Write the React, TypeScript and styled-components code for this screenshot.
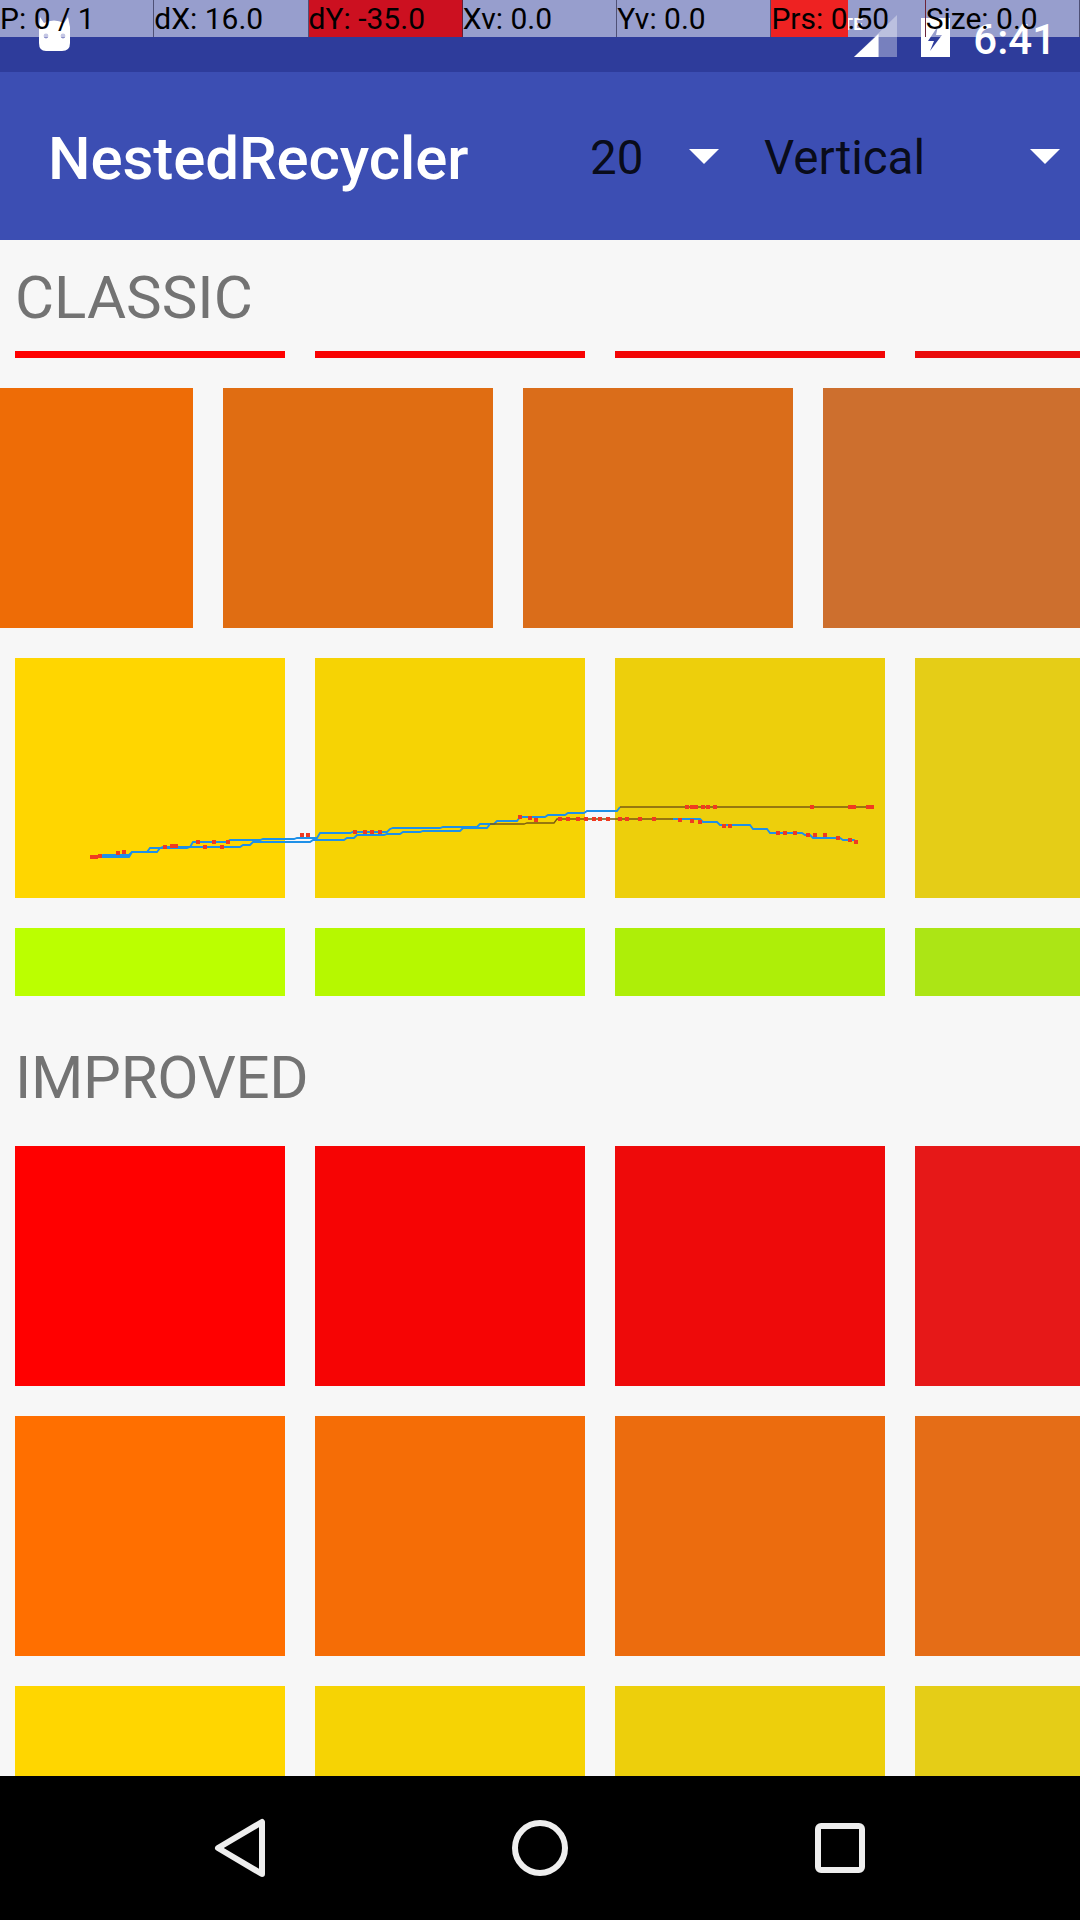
import React from "react";
import styled, { createGlobalStyle } from "styled-components";

const Global = createGlobalStyle`
  html, body { margin: 0; padding: 0; background: #000; }
  #root { width: 1080px; height: 1920px; }
`;

const Screen = styled.div`
  position: relative;
  width: 1080px;
  height: 1920px;
  display: flex;
  flex-direction: column;
  overflow: hidden;
  background: #f7f7f7;
  font-family: Roboto, "Liberation Sans", sans-serif;
`;

const StatusBar = styled.div`
  height: 72px;
  flex: none;
  background: #2e3c9b;
  display: flex;
  align-items: flex-start;
  padding: 15px 24px 0 37px;
  box-sizing: border-box;
`;

const StatusRight = styled.div`
  margin-left: auto;
  display: flex;
  align-items: flex-start;
`;

const NotifyText = styled.span`
  color: #fff;
  font-size: 17px;
  font-weight: 700;
  line-height: 18px;
  width: 9px;
  transform: translateX(-10px);
`;

const Clock = styled.span`
  color: #fff;
  font-size: 42px;
  font-weight: 500;
  line-height: 42px;
  margin-left: 23px;
  margin-top: 4px;
`;

const PointerBar = styled.div`
  position: absolute;
  left: 0;
  top: 0;
  width: 1080px;
  height: 37px;
  display: grid;
  grid-template-columns: repeat(7, 1fr);
  grid-auto-rows: 37px;
  background: rgba(255, 255, 255, 0.5);
`;

const PointerCell = styled.div<{ $bg?: string; $fill?: number }>`
  color: #000;
  font-size: 30px;
  line-height: 38px;
  white-space: nowrap;
  border-right: 1px solid rgba(40, 40, 70, 0.65);
  background: ${(p) =>
    p.$bg
      ? `linear-gradient(to right, ${p.$bg} ${p.$fill ?? 100}%, transparent ${p.$fill ?? 100}%)`
      : "none"};
`;

const Toolbar = styled.header`
  height: 168px;
  flex: none;
  background: #3c4eb3;
  display: flex;
  align-items: center;
  padding: 5px 20px 0 48px;
  box-sizing: border-box;
`;

const Title = styled.h1`
  margin: 0;
  color: #fff;
  font-size: 60px;
  font-weight: 500;
  line-height: 70px;
  letter-spacing: -0.1px;
`;

const Spinners = styled.div`
  margin-left: auto;
  display: flex;
  gap: 45px;
`;

const Spinner = styled.div<{ $width: number }>`
  width: ${(p) => p.$width}px;
  display: flex;
  align-items: center;
  justify-content: space-between;
`;

const SpinnerText = styled.span`
  color: rgba(0, 0, 0, 0.87);
  font-size: 47.5px;
  line-height: 56px;
  transform: translateY(-1px);
`;

const Caret = styled.span`
  width: 0;
  height: 0;
  border-left: 15px solid transparent;
  border-right: 15px solid transparent;
  border-top: 15px solid #fff;
  transform: translateY(-2px);
`;

const Content = styled.main`
  flex: 1;
  min-height: 0;
  overflow: hidden;
  display: flex;
  flex-direction: column;
`;

const SectionLabel = styled.h2<{ $height: number; $top: number; $tracking?: number }>`
  margin: 0;
  flex: none;
  box-sizing: border-box;
  height: ${(p) => p.$height}px;
  padding: ${(p) => p.$top}px 0 0 15px;
  color: #737373;
  font-size: 60px;
  font-weight: 400;
  line-height: 60px;
  letter-spacing: ${(p) => p.$tracking ?? 0}px;
`;

const Row = styled.div<{ $height: number; $shift?: number; $after?: number }>`
  flex: none;
  display: flex;
  gap: 30px;
  height: ${(p) => p.$height}px;
  margin-left: ${(p) => p.$shift ?? 15}px;
  margin-bottom: ${(p) => p.$after ?? 30}px;
`;

const Tile = styled.div<{ $color: string }>`
  flex: none;
  width: 270px;
  height: 100%;
  background: ${(p) => p.$color};
`;

const NavBar = styled.nav`
  height: 144px;
  flex: none;
  background: #000;
  display: grid;
  grid-template-columns: repeat(3, 300px);
  padding: 0 90px;
  box-sizing: border-box;
`;

const NavButton = styled.div`
  display: flex;
  align-items: center;
  justify-content: center;
`;

const TraceLayer = styled.svg`
  position: absolute;
  left: 0;
  top: 0;
  pointer-events: none;
`;

const REDS = ["#ff0000", "#f60404", "#ee0a0a", "#e61818"];
const ORANGES = ["#ff6f00", "#f56d06", "#ec6c0e", "#e56d17"];
const YELLOWS = ["#ffd600", "#f6d304", "#edcf0c", "#e5cd17"];
const LIMES = ["#bbff00", "#b6f800", "#aeee08", "#ace515"];
const CLASSIC_ORANGES = ["#ee6c06", "#e06d12", "#da6d1a", "#cd6f2e"];
const CLASSIC_BARS = ["#ff0000", "#f80202", "#f20505", "#ea0c0c"];

const CELLS: { text: string; bg?: string; fill?: number }[] = [
  { text: "P: 0 / 1" },
  { text: "dX: 16.0" },
  { text: "dY: -35.0", bg: "#cc1020" },
  { text: "Xv: 0.0" },
  { text: "Yv: 0.0" },
  { text: "Prs: 0.50", bg: "#ee2222", fill: 50 },
  { text: "Size: 0.0" },
];

type P = [number, number];
const UPPER: P[] = [
  [90, 857], [103, 855], [132, 852], [150, 848], [163, 847], [193, 842], [227, 842], [230, 840],
  [263, 839], [297, 838], [320, 833], [353, 832], [390, 829], [393, 828], [443, 827], [480, 824],
  [497, 821], [520, 817], [548, 815], [568, 813], [587, 811], [620, 807], [872, 807],
];
const LOWER: P[] = [
  [90, 857], [132, 852], [160, 848], [190, 847], [243, 845], [253, 842], [287, 842], [313, 840],
  [347, 838], [357, 835], [387, 834], [403, 832], [423, 831], [463, 828], [490, 824], [527, 823],
  [557, 819], [673, 819], [703, 822], [720, 825], [753, 829], [770, 833], [805, 835], [813, 838],
  [843, 840], [857, 843],
];
const DOTS: P[] = [
  [92, 857], [96, 857], [100, 856], [118, 853], [124, 852], [165, 847], [172, 846], [176, 846],
  [198, 842], [205, 847], [214, 842], [222, 847], [228, 842], [302, 835], [308, 835], [355, 832],
  [365, 832], [372, 832], [380, 832], [520, 817], [530, 818], [536, 820], [560, 819], [568, 819],
  [578, 819], [586, 819], [594, 819], [600, 819], [608, 819], [620, 819], [627, 819], [640, 819],
  [654, 819], [680, 820], [692, 821], [700, 822], [724, 826], [730, 826], [778, 833], [785, 833],
  [795, 833], [808, 835], [815, 835], [825, 835], [838, 838], [850, 840], [856, 842],
  [687, 807], [692, 807], [696, 807], [703, 807], [708, 807], [715, 807], [812, 807], [850, 807],
  [854, 807], [868, 807], [872, 807],
];

// the pointer trail moves in small steps: a level run, then a short hop to the next sample
const steps = (a: P[]) =>
  a
    .flatMap((p, i) => (i === 0 ? [p] : ([[p[0] - 3, a[i - 1][1]], p] as P[])))
    .map((p) => p.join(","))
    .join(" ");

const Trace = () => (
  <TraceLayer width={1080} height={1920} viewBox="0 0 1080 1920">
    <polyline points={steps(UPPER.slice(0, -1))} fill="none" stroke="#1e90e8" strokeWidth={1.8} />
    <polyline points={steps(LOWER.slice(0, 15))} fill="none" stroke="#1e90e8" strokeWidth={1.8} />
    <polyline points={steps(LOWER.slice(17))} fill="none" stroke="#1e90e8" strokeWidth={1.8} />
    <polyline points={steps(UPPER.slice(-2))} fill="none" stroke="#7a5a10" strokeWidth={1.3} />
    <polyline points={steps(LOWER.slice(14, 18))} fill="none" stroke="#7a5a10" strokeWidth={1.3} />
    {DOTS.map(([x, y], i) => (
      <rect key={i} x={x - 2} y={y - 2} width={4} height={4} fill="#f03a20" />
    ))}
  </TraceLayer>
);

const AndroidHead = () => (
  <svg width="34" height="36" viewBox="0 0 34 36">
    <path
      d="M3 2 L7 8 Q17 3 27 8 L31 2 L33 12 L33 28 Q33 36 25 36 L9 36 Q2 36 2 28 L2 12 Z"
      fill="#fff"
    />
    <circle cx="9" cy="21" r="2.4" fill="#8a8ec8" />
    <circle cx="26" cy="21" r="2.4" fill="#8a8ec8" />
  </svg>
);

const SignalIcon = () => (
  <svg width="43" height="42" viewBox="0 0 42 42" preserveAspectRatio="none">
    <path d="M42 0 L42 42 L0 42 Z" fill="#fff" fillOpacity={0.35} />
    <path d="M24 19 L24 42 L0 42 Z" fill="#fff" />
  </svg>
);

const BatteryIcon = () => (
  <svg width="29" height="39" viewBox="0 0 29 39" style={{ marginLeft: 24, marginTop: 3 }}>
    <path d="M0 0 H29 V39 H0 Z M17 8 L7 23 H13 L9 33 L21 17 H15 Z" fill="#fff" fillRule="evenodd" />
  </svg>
);

const BackIcon = () => (
  <svg width="54" height="62" viewBox="0 0 54 62">
    <path d="M49 5 L49 57 L5 31 Z" fill="none" stroke="#eee" strokeWidth={6} strokeLinejoin="round" />
  </svg>
);

const HomeIcon = () => (
  <svg width="56" height="56" viewBox="0 0 56 56">
    <circle cx="28" cy="28" r="25" fill="none" stroke="#eee" strokeWidth={6} />
  </svg>
);

const RecentIcon = () => (
  <svg width="50" height="50" viewBox="0 0 50 50">
    <rect x="3" y="3" width="44" height="44" rx="3" fill="none" stroke="#eee" strokeWidth={6} />
  </svg>
);

const Tiles = ({ colors }: { colors: string[] }) => (
  <>
    {colors.map((c, i) => (
      <Tile key={i} $color={c} />
    ))}
  </>
);

export default function App() {
  return (
    <Screen>
      <Global />
      <StatusBar>
        <AndroidHead />
        <StatusRight>
          <NotifyText>LTE</NotifyText>
          <SignalIcon />
          <BatteryIcon />
          <Clock>6:41</Clock>
        </StatusRight>
      </StatusBar>
      <Toolbar>
        <Title>NestedRecycler</Title>
        <Spinners>
          <Spinner $width={129}>
            <SpinnerText>20</SpinnerText>
            <Caret />
          </Spinner>
          <Spinner $width={296}>
            <SpinnerText>Vertical</SpinnerText>
            <Caret />
          </Spinner>
        </Spinners>
      </Toolbar>
      <Content>
        <SectionLabel $height={111} $top={28}>CLASSIC</SectionLabel>
        <Row $height={7}>
          <Tiles colors={CLASSIC_BARS} />
        </Row>
        <Row $height={240} $shift={-77}>
          <Tiles colors={CLASSIC_ORANGES} />
        </Row>
        <Row $height={240}>
          <Tiles colors={YELLOWS} />
        </Row>
        <Row $height={68} $after={0}>
          <Tiles colors={LIMES} />
        </Row>
        <SectionLabel $height={150} $top={52} $tracking={-0.3}>IMPROVED</SectionLabel>
        <Row $height={240}>
          <Tiles colors={REDS} />
        </Row>
        <Row $height={240}>
          <Tiles colors={ORANGES} />
        </Row>
        <Row $height={240}>
          <Tiles colors={YELLOWS} />
        </Row>
      </Content>
      <NavBar>
        <NavButton>
          <BackIcon />
        </NavButton>
        <NavButton>
          <HomeIcon />
        </NavButton>
        <NavButton>
          <RecentIcon />
        </NavButton>
      </NavBar>
      <Trace />
      <PointerBar>
        {CELLS.map((c) => (
          <PointerCell key={c.text} $bg={c.bg} $fill={c.fill}>
            {c.text}
          </PointerCell>
        ))}
      </PointerBar>
    </Screen>
  );
}
